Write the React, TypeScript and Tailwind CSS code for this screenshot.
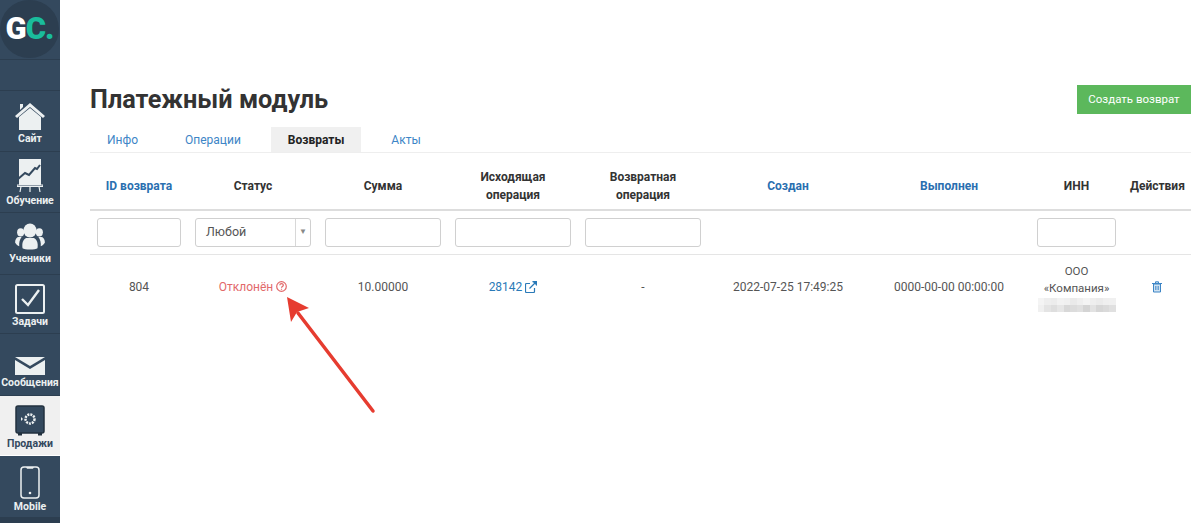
import React from "react";

const FONT = { fontFamily: 'Roboto, "Noto Sans", sans-serif' };

function HomeIcon() {
  return (
    <svg width="32" height="30" viewBox="0 0 32 30" fill="none">
      <path d="M6 3h3v3l-3 3z" fill="#ecf0f1" />
      <path d="M1 15 16 2l15 13-2 2L16 6 3 17z" fill="#ecf0f1" />
      <path d="M5 16 16 7l11 9v13H5z" fill="#ecf0f1" />
    </svg>
  );
}

function ChartIcon() {
  return (
    <svg width="26" height="34" viewBox="0 0 26 34" fill="none">
      <path d="M2 0h22v26H2z" fill="#ecf0f1" />
      <path d="M1 20 8 14l4 2 6-7 2 1 3-4" stroke="#34495e" strokeWidth="2" fill="none" />
      <path d="M0 26h26v1.5H0zM4 27.500 3 33M13 27.500V33M22 27.500 23 33" stroke="#ecf0f1" strokeWidth="1.200" />
    </svg>
  );
}

function UsersIcon() {
  return (
    <svg width="32" height="28" viewBox="0 0 32 30" fill="#ecf0f1">
      <ellipse cx="16" cy="8" rx="7" ry="7.500" />
      <ellipse cx="6" cy="10" rx="3.800" ry="4.500" />
      <ellipse cx="26" cy="10" rx="3.800" ry="4.500" />
      <path d="M8 27c-1-6 1-10 4-11h8c3 1 5 5 4 11-2 2-14 2-16 0z" />
      <path d="M0 21c0-4 2-6 4-6h3c-2 3-3 6-2.500 10C3 24.500 1 23 0 21zM32 21c0-4-2-6-4-6h-3c2 3 3 6 2.500 10 1.500-.5 3.500-2 4.500-4z" />
    </svg>
  );
}

function TaskIcon() {
  return (
    <svg width="30" height="30" viewBox="0 0 30 30" fill="none">
      <rect x="1" y="1" width="28" height="28" rx="1.500" stroke="#ecf0f1" strokeWidth="2" />
      <path d="M7 15l6 6L24 6" stroke="#ecf0f1" strokeWidth="2.400" />
    </svg>
  );
}

function MailIcon() {
  return (
    <svg width="30" height="18" viewBox="0 0 30 18" fill="#ecf0f1">
      <path d="M0 0 15 9 30 0z" />
      <path d="M0 3 15 12 30 3v15H0z" />
    </svg>
  );
}

function SafeIcon() {
  return (
    <svg width="30" height="31" viewBox="0 0 30 31" fill="none">
      <rect x="1" y="1" width="28" height="27" rx="2" fill="#34495e" stroke="#22313f" strokeWidth="1.500" />
      <path d="M3 28h4v2.500H3zM23 28h4v2.500h-4z" fill="#22313f" />
      <circle cx="15" cy="14" r="4.500" stroke="#ecf0f1" strokeWidth="2.500" strokeDasharray="2 1" />
      <path d="M6 12v4l2-2z" fill="#ecf0f1" />
    </svg>
  );
}

function PhoneIcon() {
  return (
    <svg width="20" height="33" viewBox="0 0 20 33" fill="none">
      <rect x="1" y="1" width="18" height="31" rx="3" stroke="#ecf0f1" strokeWidth="1.500" />
      <path d="M6 1h8l-1 1.800H7z" fill="#ecf0f1" />
      <circle cx="10" cy="27" r="1.300" fill="#ecf0f1" />
    </svg>
  );
}

const navItems = [
  { label: "Сайт", box: "h-[61px] pb-[6px]", icon: <HomeIcon /> },
  { label: "Обучение", box: "h-[61px] pb-[5px]", icon: <ChartIcon /> },
  { label: "Ученики", box: "h-[62px] pb-[9px]", icon: <UsersIcon /> },
  { label: "Задачи", box: "h-[59px] pb-[5px]", icon: <TaskIcon /> },
  { label: "Сообщения", box: "h-[62px] pb-[6px]", icon: <MailIcon /> },
];

function Sidebar() {
  return (
    <aside className="flex h-[523px] w-[60px] shrink-0 flex-col bg-[#34495e]">
      {/* Logo */}
      <div className="flex h-[60px] items-start border-b border-[#2c3e50]">
        <div className="flex h-[58px] w-[59px] items-center justify-center rounded-full bg-[#2c3e50] text-[31px] font-black tracking-[-1px] text-white">
          G<span className="text-[#1abc9c]">C.</span>
        </div>
      </div>
      <div className="h-[31px] border-b border-[#2c3e50]" />

      {navItems.map((item) => (
        <div
          key={item.label}
          className={`flex ${item.box} flex-col items-center justify-end gap-[1px] border-b border-[#2c3e50]`}
        >
          {item.icon}
          <span className="text-[10.500px] font-bold leading-[13px] text-[#ecf0f1]">{item.label}</span>
        </div>
      ))}

      {/* Active item */}
      <div className="flex h-[60px] flex-col items-center justify-end gap-[1px] border-b border-white bg-[#f0f0f0] pb-[5px]">
        <SafeIcon />
        <span className="text-[10.500px] font-bold leading-[13px] text-[#34495e]">Продажи</span>
      </div>

      <div className="flex h-[61px] flex-col items-center justify-end gap-[1px] pb-[4px]">
        <PhoneIcon />
        <span className="text-[10.500px] font-bold leading-[13px] text-[#ecf0f1]">Mobile</span>
      </div>
      <div className="flex-1 bg-[#2c3e50]" />
    </aside>
  );
}

const tabs = ["Инфо", "Операции", "Возвраты", "Акты"];

const columns = [
  { title: "ID возврата", w: "w-[98px]", sort: true },
  { title: "Статус", w: "w-[130px]" },
  { title: "Сумма", w: "w-[130px]" },
  { title: "Исходящая операция", w: "w-[130px]" },
  { title: "Возвратная операция", w: "w-[130px]" },
  { title: "Создан", w: "w-[160px]", sort: true },
  { title: "Выполнен", w: "w-[162px]", sort: true },
  { title: "ИНН", w: "w-[93px]" },
  { title: "Действия", w: "w-[68px]" },
];

function FilterInput() {
  return <div className="h-[29px] w-full rounded-[3px] border border-[#d0d0d0] bg-white" />;
}

const blurCells = [
  "#f4f4f4", "#eeeeee", "#ececec", "#f2f2f2", "#f0f0f0", "#eaeaea", "#efefef", "#f4f4f4", "#eeeeee", "#ebebeb", "#efefef", "#f0f0f0",
  "#f0f0f0", "#e4e4e4", "#dedede", "#e6e6e6", "#d8d8d8", "#dcdcdc", "#e0e0e0", "#d4d4d4", "#e2e2e2", "#d6d6d6", "#dadada", "#e0e0e0",
];

function Table() {
  return (
    <table className="w-[1101px] table-fixed border-collapse text-center text-[12px] text-[#555]">
      <thead>
        <tr className="h-[57px] border-b-2 border-[#dddddd]">
          {columns.map((c) => (
            <th
              key={c.title}
              className={`${c.w} px-[7px] pt-[10px] text-[12px] font-bold leading-[18px] ${c.sort ? "text-[#2a6fb0]" : "text-[#333]"}`}
            >
              {c.title}
            </th>
          ))}
        </tr>
      </thead>
      <tbody>
        <tr className="h-[44px] border-b border-[#e5e5e5]">
          <td className="px-[7px]"><FilterInput /></td>
          <td className="px-[7px]">
            <div className="flex h-[29px] items-center rounded-[3px] border border-[#d0d0d0] bg-white text-left text-[12.500px] text-[#555]">
              <span className="flex-1 pl-[10px]">Любой</span>
              <span className="flex h-full w-[15px] items-center justify-center border-l border-[#d8d8d8] text-[8px] text-[#888]">▼</span>
            </div>
          </td>
          <td className="px-[7px]"><FilterInput /></td>
          <td className="px-[7px]"><FilterInput /></td>
          <td className="px-[7px]"><FilterInput /></td>
          <td />
          <td />
          <td className="px-[7px]"><FilterInput /></td>
          <td />
        </tr>
        <tr className="h-[65px]">
          <td>804</td>
          <td className="text-[#e2696a]">
            <span className="inline-flex items-center gap-[3px]">
              Отклонён
              <svg width="11" height="11" viewBox="0 0 11 11" fill="none" stroke="#e2696a" strokeWidth="1.200">
                <circle cx="5.500" cy="5.500" r="4.800" />
                <path d="M3.800 4.300c0-2.200 3.500-2.200 3.500 0 0 1.300-1.800 1.200-1.800 2.500M5.500 7.800v1" />
              </svg>
            </span>
          </td>
          <td>10.00000</td>
          <td className="text-[#2a7ab8]">
            <span className="inline-flex items-center gap-[3px]">
              28142
              <svg width="12" height="12" viewBox="0 0 12 12" fill="none" stroke="#2a7ab8" strokeWidth="1.200">
                <path d="M9.500 7v3.500a1 1 0 0 1-1 1h-7a1 1 0 0 1-1-1v-7a1 1 0 0 1 1-1H5" />
                <path d="M4.500 7.500 11 1" />
                <path d="M7.500.6h4v4" fill="#2a7ab8" />
              </svg>
            </span>
          </td>
          <td>-</td>
          <td>2022-07-25 17:49:25</td>
          <td>0000-00-00 00:00:00</td>
          <td className="pt-[1px] text-[11.500px] leading-[17.500px]">
            <div>ООО</div>
            <div>«Компания»</div>
            <div className="mx-auto grid h-[14px] w-[78px] grid-cols-12 grid-rows-2">
              {blurCells.map((c, i) => (
                <div key={i} style={{ backgroundColor: c }} />
              ))}
            </div>
          </td>
          <td>
            <svg className="mx-auto" width="10" height="12" viewBox="0 0 10 12" fill="#cfe2f1" stroke="#3d85c6" strokeWidth="1">
              <path d="M1.500 3h7v8h-7zM0 2.500h10M3.500 2V.8h3V2" />
              <path d="M3.500 5v4M5 5v4M6.500 5v4" strokeWidth=".7" />
            </svg>
          </td>
        </tr>
      </tbody>
    </table>
  );
}

export default function App() {
  return (
    <div className="relative flex h-[523px] w-[1200px] overflow-hidden bg-white" style={FONT}>
      <Sidebar />
      <main className="ml-[30px] w-[1101px] pt-[85px]">
        <div className="flex h-[29px] items-center justify-between">
          <h1 className="text-[25.300px] font-bold leading-[29px] text-[#333]">Платежный модуль</h1>
          <button className="h-[29px] w-[114px] bg-[#5cb85c] text-[11.500px] text-white">Создать возврат</button>
        </div>

        {/* Tabs */}
        <div className="mt-[13px] flex h-[26px] gap-[13px] border-b border-[#eeeeee]">
          {tabs.map((t) => (
            <div
              key={t}
              className={`flex h-[25px] items-center px-[17px] text-[12px] ${
                t === "Возвраты" ? "bg-[#f0f0f0] font-bold text-[#222]" : "text-[#3d85c6]"
              }`}
            >
              {t}
            </div>
          ))}
        </div>

        <Table />
      </main>

      {/* Annotation arrow */}
      <svg className="absolute left-0 top-0" width="1200" height="523" viewBox="0 0 1200 523" fill="none">
        <path d="M373 411 298 313" stroke="#e63c30" strokeWidth="3.500" strokeLinecap="round" />
        <path d="M287 297 309 308 297 312 291 322z" fill="#e63c30" />
      </svg>
    </div>
  );
}
